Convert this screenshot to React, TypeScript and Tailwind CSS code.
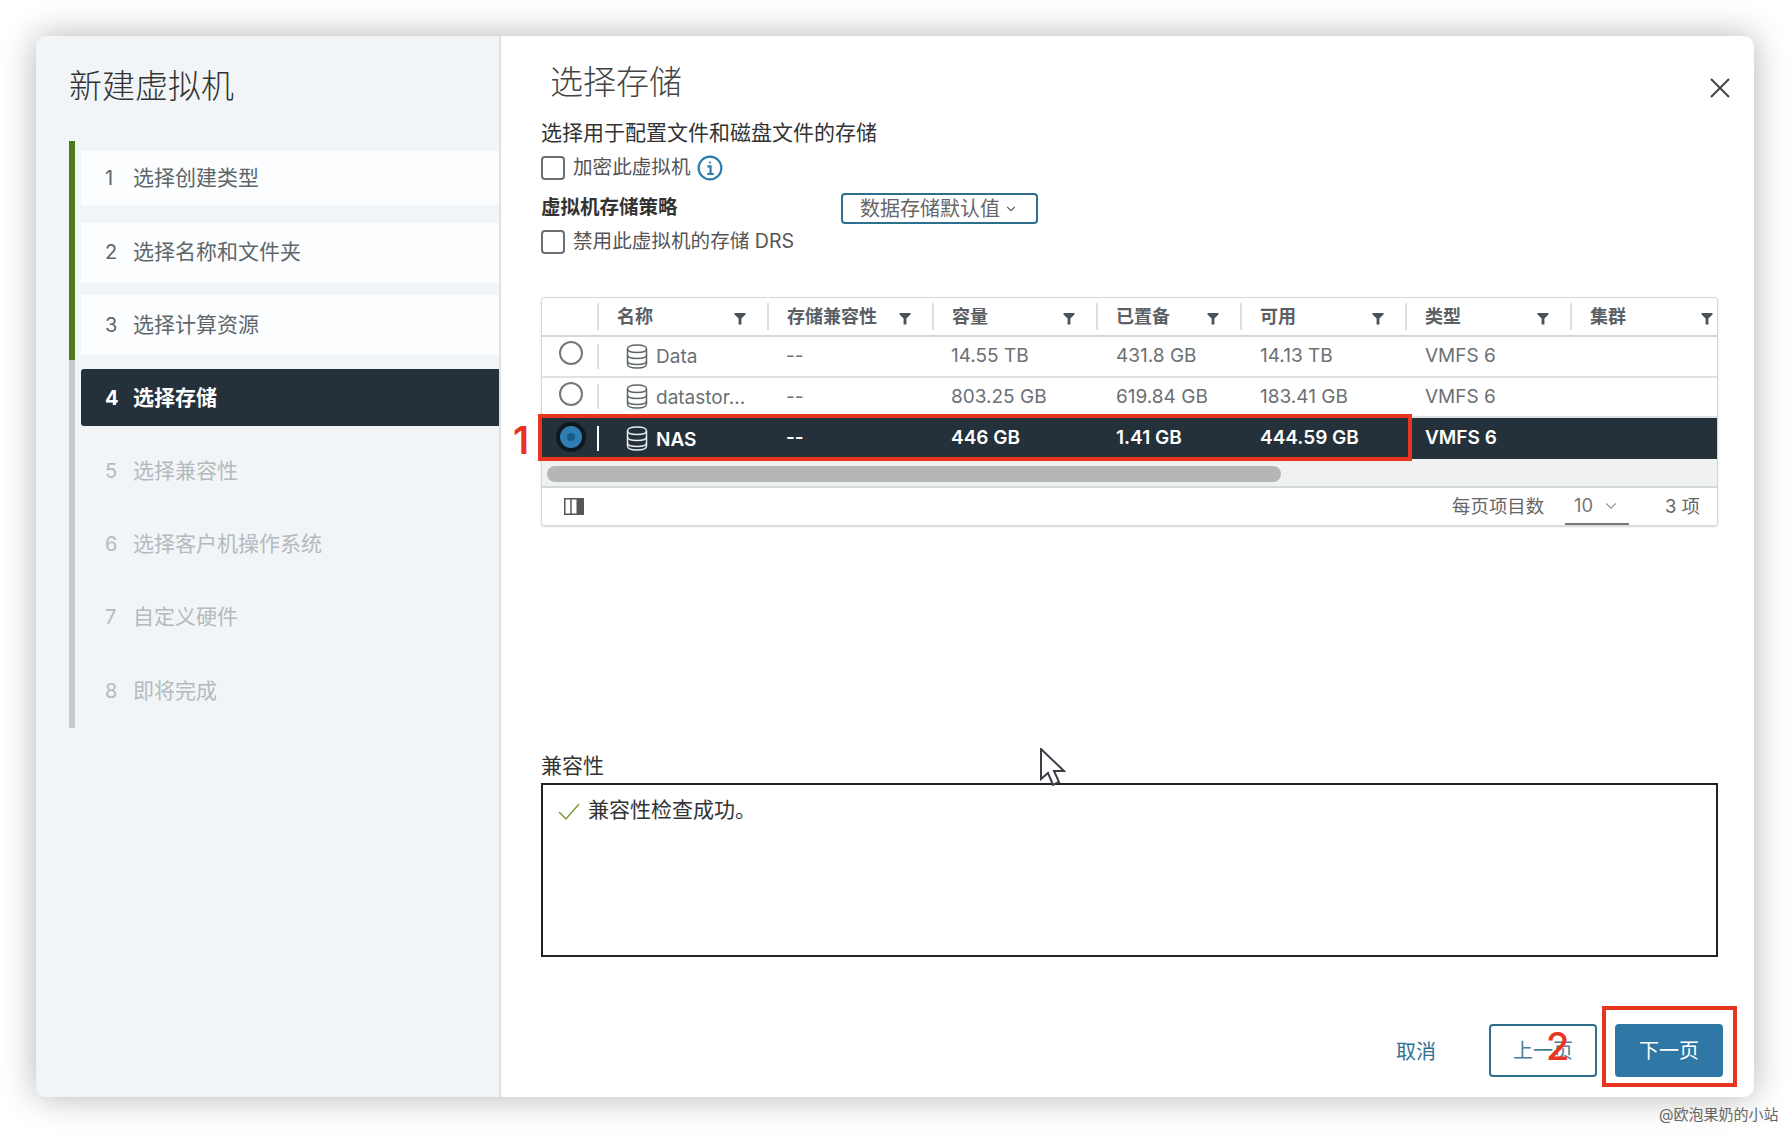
import { ChevronDown } from 'lucide-react';

const COLS = 'grid grid-cols-[55px_170px_165px_164px_144px_165px_165px_1fr]';

const steps = [
  { n: 1, label: '选择创建类型', band: 'h-[54px] bg-[#fbfdfe] text-[#5f6669]' },
  { n: 2, label: '选择名称和文件夹', band: 'h-[60px] mt-[18px] pb-[3px] bg-[#fbfdfe] text-[#5f6669]' },
  { n: 3, label: '选择计算资源', band: 'h-[60px] mt-[12px] pb-[1px] bg-[#fbfdfe] text-[#5f6669]' },
  { n: 4, label: '选择存储', band: 'h-[57px] mt-[14px] bg-[#25313a] text-white font-bold rounded-l-[3px]' },
  { n: 5, label: '选择兼容性', band: 'h-[57px] mt-[16px] text-[#b4babd]' },
  { n: 6, label: '选择客户机操作系统', band: 'h-[57px] mt-[16px] text-[#b4babd]' },
  { n: 7, label: '自定义硬件', band: 'h-[57px] mt-[16px] text-[#b4babd]' },
  { n: 8, label: '即将完成', band: 'h-[57px] mt-[17px] text-[#b4babd]' },
];

const columns = ['名称', '存储兼容性', '容量', '已置备', '可用', '类型', '集群'];

const rows = [
  { name: 'Data', cap: '14.55 TB', prov: '431.8 GB', free: '14.13 TB', selected: false },
  { name: 'datastor...', cap: '803.25 GB', prov: '619.84 GB', free: '183.41 GB', selected: false },
  { name: 'NAS', cap: '446 GB', prov: '1.41 GB', free: '444.59 GB', selected: true },
];

function FilterIcon() {
  return (
    <svg width="12" height="13" viewBox="0 0 12 13" className="mt-[4px] shrink-0">
      <path d="M0.5 1h11v1.6L7.4 6.6V12.5H4.6V6.6L0.5 2.6z" fill="#4a5257" />
    </svg>
  );
}

function DbIcon({ color }: { color: string }) {
  return (
    <svg width="22" height="25" viewBox="0 0 22 25" fill="none" stroke={color} strokeWidth="1.5" className="shrink-0">
      <path d="M1.5 5c0-2.500 4-4 9.500-4s9.500 1.500 9.500 4v15c0 2.500-4 4-9.500 4s-9.500-1.500-9.500-4z" />
      <path d="M1.500 5c0 2.200 4 3.500 9.500 3.500s9.500-1.300 9.500-3.500" />
      <path d="M1.500 11c0 2.200 4 3.500 9.500 3.500s9.500-1.300 9.500-3.500" />
      <path d="M1.500 17c0 2.200 4 3.500 9.500 3.500s9.500-1.300 9.500-3.500" />
    </svg>
  );
}

function Checkbox() {
  return <div className="w-[24px] h-[24px] shrink-0 rounded-[4px] border-2 border-[#6b6f72] bg-white" />;
}

export default function App() {
  return (
    <div className="relative w-[1790px] h-[1134px] overflow-hidden bg-white pl-[36px] pt-[36px] font-['Inter','Noto_Sans_CJK_SC',sans-serif]">
      <div className="flex w-[1718px] h-[1061px] rounded-[10px] overflow-hidden bg-white shadow-[0_0_34px_rgba(0,0,0,0.3)]">
        {/* wizard steps */}
        <div className="w-[465px] shrink-0 bg-[#f1f5f7] border-r-2 border-[#dfe3e6]">
          <div className="pl-[33px] pt-[30px] h-[105px] text-[33px] leading-[40px] font-light text-[#333]">新建虚拟机</div>
          <div className="flex">
            <div className="w-[6px] ml-[33px] shrink-0">
              <div className="h-[219px] bg-[#4e7a1c]" />
              <div className="h-[368px] bg-[#c5cccf]" />
            </div>
            <div className="flex-1 ml-[6px] pt-[10px]">
              {steps.map((s) => (
                <div key={s.n} className={`flex items-center text-[21px] ${s.band}`}>
                  <span className="w-[52px] pl-[24px] shrink-0 text-[20px]">{s.n}</span>
                  <span>{s.label}</span>
                </div>
              ))}
            </div>
          </div>
        </div>

        {/* main panel */}
        <div className="relative flex-1 pl-[40px] pr-[36px] pt-[26px] flex flex-col">
          <svg width="20" height="20" viewBox="0 0 20 20" stroke="#444" strokeWidth="2" className="absolute top-[42px] right-[24px]">
            <path d="M1 1l18 18M19 1L1 19" />
          </svg>

          <div className="ml-[9px] h-[40px] text-[33px] leading-[40px] font-light text-[#444]">选择存储</div>
          <div className="mt-[17px] h-[28px] text-[21px] leading-[28px] text-[#333]">选择用于配置文件和磁盘文件的存储</div>

          <div className="mt-[9px] h-[24px] flex items-center">
            <Checkbox />
            <span className="ml-[8px] text-[19.6px] text-[#555]">加密此虚拟机</span>
            <svg width="26" height="26" viewBox="0 0 24 24" fill="none" stroke="#2b7bab" strokeWidth="2" className="ml-[6px]">
              <circle cx="12" cy="12" r="10.500" />
              <path d="M9.500 10.500H12.500V17M9.500 17.500h6" />
              <circle cx="12" cy="7" r="1" fill="#2b7bab" stroke="none" />
            </svg>
          </div>

          <div className="mt-[13px] h-[31px] flex items-center">
            <span className="w-[300px] -mt-[2px] text-[19.5px] font-bold text-[#333]">虚拟机存储策略</span>
            <div className="w-[197px] h-full flex items-center pl-[17px] rounded-[4px] border-2 border-[#2f6f8e] text-[20px] text-[#666]">
              数据存储默认值
              <ChevronDown size={14} className="ml-[4px]" />
            </div>
          </div>

          <div className="mt-[6px] h-[24px] flex items-center">
            <Checkbox />
            <span className="ml-[8px] text-[19.6px] text-[#555]">禁用此虚拟机的存储 DRS</span>
          </div>

          {/* datastore table */}
          <div className="mt-[43px] h-[229px] border border-[#d5d8da] rounded-[3px] shadow-[0_1px_2px_rgba(0,0,0,0.15)] flex flex-col">
            <div className={`${COLS} h-[39px] border-b-2 border-[#d5d8da] items-center`}>
              <div />
              {columns.map((c, i) => (
                <div
                  key={c}
                  className={`h-[27px] border-l-2 border-[#dcdfe1] pl-[18px] flex items-center justify-between text-[18px] font-bold text-[#5a6064] ${i === 6 ? 'pr-[4px]' : 'pr-[21px]'}`}
                >
                  {c}
                  <FilterIcon />
                </div>
              ))}
            </div>

            {rows.map((r) => (
              <div
                key={r.name}
                className={`${COLS} items-center text-[19px] ${
                  r.selected
                    ? 'h-[41px] bg-[#25313a] text-white font-semibold'
                    : 'h-[41px] border-b-2 border-[#dfe2e4] text-[#6a7074]'
                }`}
              >
                <div className="flex items-center pl-[17px] h-full">
                  {r.selected ? (
                    <div className="w-[30px] h-[30px] -ml-[3px] -mt-[4px] rounded-full border-[4px] border-[#0f181e] bg-[#2f7fb5] flex items-center justify-center">
                      <div className="w-[8px] h-[8px] rounded-full bg-[#1a5a88]" />
                    </div>
                  ) : (
                    <div className="w-[24px] h-[24px] rounded-full border-2 border-[#777] bg-white -mt-[6px]" />
                  )}
                </div>
                <div className={`h-[25px] border-l-2 pl-[27px] flex items-center gap-[8px] ${r.selected ? 'border-white' : 'border-[#dcdfe1]'}`}>
                  <DbIcon color={r.selected ? '#e8ecee' : '#5f666a'} />
                  <span className="mt-[3px]">{r.name}</span>
                </div>
                <div className="pl-[19px]">--</div>
                <div className="pl-[19px]">{r.cap}</div>
                <div className="pl-[20px]">{r.prov}</div>
                <div className="pl-[20px]">{r.free}</div>
                <div className="pl-[20px]">VMFS 6</div>
                <div />
              </div>
            ))}

            <div className="h-[29px] bg-[#f0f1f1] border-b-2 border-[#d5d8da] pt-[7px] pl-[5px]">
              <div className="w-[734px] h-[16px] rounded-full bg-[#b5b6b6]" />
            </div>

            <div className="flex-1 flex items-center pl-[22px] pr-[17px] text-[18.4px] text-[#666]">
              <svg width="20" height="17" viewBox="0 0 20 17" fill="none" stroke="#555" strokeWidth="1.500">
                <rect x="0.750" y="0.750" width="18.500" height="15.500" />
                <path d="M7 1v15" />
                <rect x="12.500" y="1" width="6.500" height="15" fill="#555" stroke="none" />
              </svg>
              <span className="ml-auto">每页项目数</span>
              <div className="ml-[21px] w-[64px] h-[37px] flex items-center gap-[9px] pl-[9px] border-b-2 border-[#777] text-[#777]">
                10
                <ChevronDown size={18} strokeWidth={1.500} className="text-[#999]" />
              </div>
              <span className="ml-[36px]">3 项</span>
            </div>
          </div>

          {/* compatibility */}
          <div className="mt-[226px] h-[28px] text-[21px] leading-[28px] text-[#333]">兼容性</div>
          <div className="mt-[3px] h-[174px] border-2 border-[#222] pl-[15px] pt-[11px] flex items-start gap-[8px]">
            <svg width="22" height="18" viewBox="0 0 22 18" fill="none" stroke="#7d9a3c" strokeWidth="1.500" className="mt-[7px]">
              <path d="M1 9l7 7L21 1" />
            </svg>
            <span className="text-[21px] leading-[28px] text-[#333]">兼容性检查成功。</span>
          </div>

          {/* footer buttons */}
          <div className="mt-[67px] h-[53px] -mr-[5px] flex items-center justify-end text-[20px]">
            <span className="mr-[53px] mt-[2px] text-[#2e7094]">取消</span>
            <div className="w-[108px] h-full pt-[1px] rounded-[4px] border-2 border-[#2f6f8e] text-[#4a7d98] flex items-center justify-center">上一页</div>
            <div className="ml-[18px] w-[108px] h-full pt-[1px] rounded-[4px] bg-[#2f77a5] text-white flex items-center justify-center">下一页</div>
          </div>
        </div>
      </div>

      {/* annotations over the screenshot */}
      <div className="absolute left-[538px] top-[414px] w-[874px] h-[47px] border-[4px] border-[#e8351f]" />
      <div className="absolute left-[1602px] top-[1006px] w-[135px] h-[81px] border-[4px] border-[#e8351f]" />
      <span className="absolute left-[513px] top-[418px] text-[38px] leading-[44px] font-semibold text-[#e8351f]">1</span>
      <span className="absolute left-[1546px] top-[1024px] text-[38px] leading-[44px] font-medium text-[#e8351f]">2</span>
      <svg width="26" height="40" viewBox="0 0 26 40" fill="white" stroke="#3a4046" strokeWidth="2" className="absolute left-[1040px] top-[748px]">
        <path d="M1 1v30l7-6 5 12 6-3-5-11h10z" />
      </svg>
      <span className="absolute left-[1659px] top-[1104px] text-[15px] leading-[22px] text-[#666]">@欧泡果奶的小站</span>
    </div>
  );
}
